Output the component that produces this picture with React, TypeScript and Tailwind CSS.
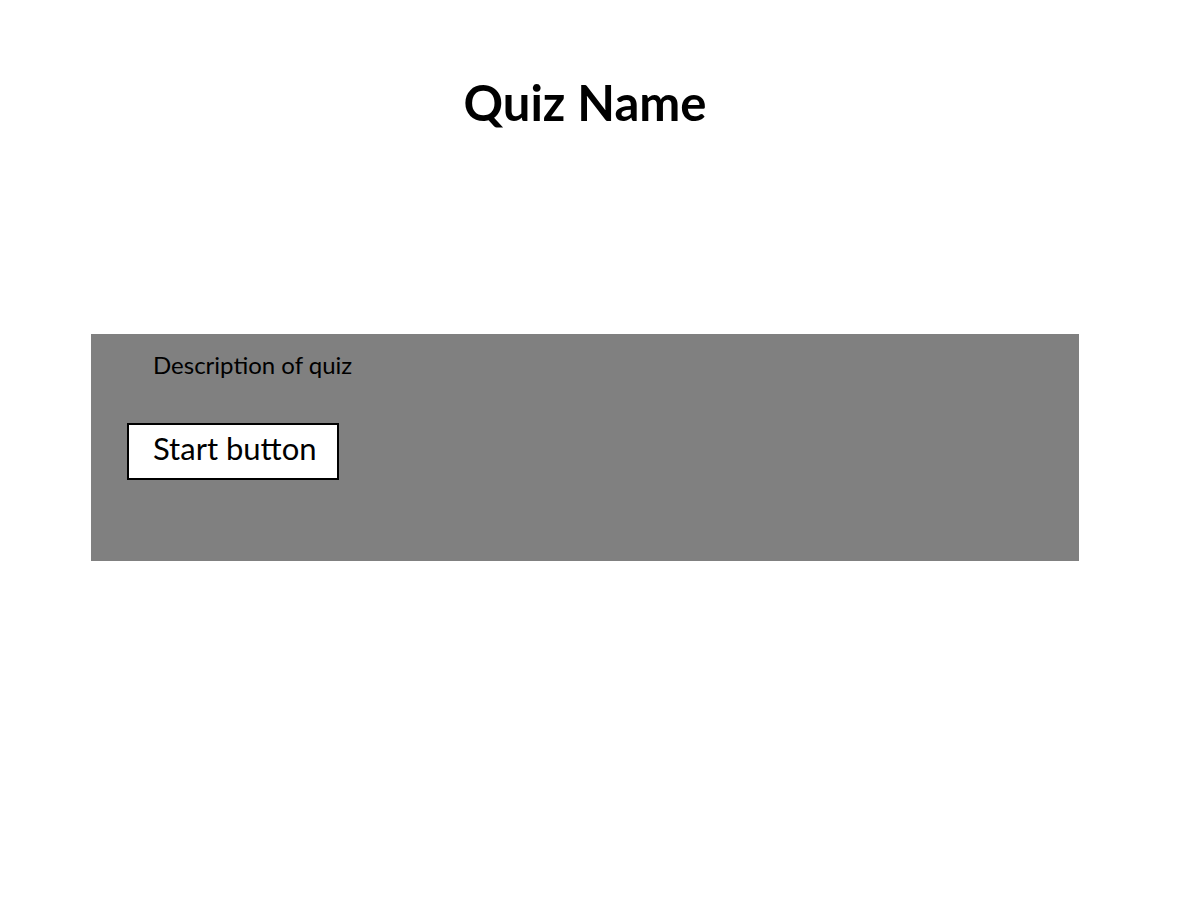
import React from 'react';

const App = () => {
  return (
    <div className="min-h-screen w-[1200px] h-[900px] bg-white" style={{ fontFamily: 'Lato, "Open Sans", sans-serif' }}>
      <div className="ml-[91px] w-[988px] pt-[70px]">
        <h1 className="text-center text-[49px] leading-[64px] font-bold text-black">Quiz Name</h1>

        <div className="mt-[200px] h-[227px] bg-[#808080] pl-[36px] pt-[15px]">
          <p className="ml-[26px] text-[24px] leading-[32px] text-black">Description of quiz</p>
          <button className="mt-[42px] flex h-[57px] w-[212px] items-center border-2 border-black bg-white pb-[6px] pl-[24px] text-[31px] text-black">
            Start button
          </button>
        </div>
      </div>
    </div>
  );
};

export default App;
